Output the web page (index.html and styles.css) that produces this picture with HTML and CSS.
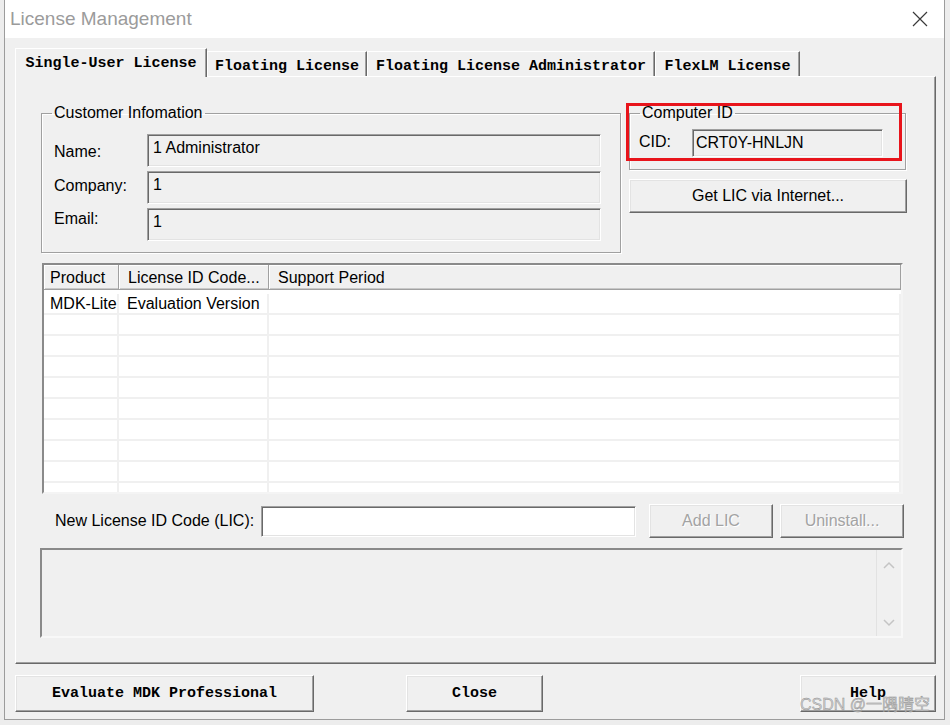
FILE: index.html
```html
<!DOCTYPE html>
<html>
<head>
<meta charset="utf-8">
<title>License Management</title>
<link rel="stylesheet" href="styles.css">
</head>
<body>
<div class="window">
  <div class="titlebar">
    <span class="title">License Management</span>
    <svg class="xbtn" viewBox="0 0 16 16"><path d="M1 1 L15 15 M15 1 L1 15" stroke="#3a3a3a" stroke-width="1.2" fill="none"/></svg>
  </div>
  <div class="client">
    <div class="tabs">
      <div class="tab active t1">Single-User License</div>
      <div class="tab t2">Floating License</div>
      <div class="tab t3">Floating License Administrator</div>
      <div class="tab t4">FlexLM License</div>
    </div>
    <div class="page">
      <div class="top">
        <fieldset class="group cust">
          <legend>Customer Infomation</legend>
          <div class="formgrid">
            <label class="lbl lbl-name">Name:</label><div class="field">1 Administrator</div>
            <label class="lbl lbl-comp">Company:</label><div class="field">1</div>
            <label class="lbl lbl-mail">Email:</label><div class="field">1</div>
          </div>
        </fieldset>
        <div class="rightcol">
          <fieldset class="group cid">
            <legend>Computer ID</legend>
            <div class="cidrow">
              <label class="cidlbl">CID:</label><div class="field cidfield">CRT0Y-HNLJN</div>
            </div>
          </fieldset>
          <div class="redbox"></div>
          <div class="btn getlic">Get LIC via Internet...</div>
        </div>
      </div>

      <div class="list">
        <div class="lhead">
          <div class="hcell">Product</div>
          <div class="hcell">License ID Code...</div>
          <div class="hcell">Support Period</div>
        </div>
        <div class="lbody">
          <div class="lrow"><div>MDK-Lite</div><div>Evaluation Version</div><div></div></div>
          <div class="lrow"><div></div><div></div><div></div></div>
          <div class="lrow"><div></div><div></div><div></div></div>
          <div class="lrow"><div></div><div></div><div></div></div>
          <div class="lrow"><div></div><div></div><div></div></div>
          <div class="lrow"><div></div><div></div><div></div></div>
          <div class="lrow"><div></div><div></div><div></div></div>
          <div class="lrow"><div></div><div></div><div></div></div>
          <div class="lrow"><div></div><div></div><div></div></div>
          <div class="lrow"><div></div><div></div><div></div></div>
        </div>
      </div>

      <div class="licrow">
        <label class="liclbl">New License ID Code (LIC):</label>
        <div class="licinput"></div>
        <div class="btn disabled addlic">Add LIC</div>
        <div class="btn disabled uninst">Uninstall...</div>
      </div>

      <div class="msg">
        <div class="msgtext"></div>
        <div class="vscroll">
          <svg viewBox="0 0 12 8"><path d="M1 7 L6 2 L11 7" stroke="#c4c4c4" stroke-width="1.5" fill="none"/></svg>
          <svg viewBox="0 0 12 8"><path d="M1 1 L6 6 L11 1" stroke="#c4c4c4" stroke-width="1.5" fill="none"/></svg>
        </div>
      </div>
    </div>

    <div class="buttons">
      <div class="btn mono evaluate">Evaluate MDK Professional</div>
      <div class="btn mono close">Close</div>
      <div class="btn mono help">Help</div>
    </div>
  </div>
  <div class="watermark">CSDN @一隅晴空</div>
</div>
</body>
</html>
```

FILE: styles.css
```css
* { box-sizing: border-box; }
html, body { margin: 0; padding: 0; }
body {
  width: 950px;
  height: 725px;
  overflow: hidden;
  background: #ededed;
  font-family: "Liberation Sans", Arial, sans-serif;
  font-size: 16px;
  color: #000;
}

.window {
  position: relative;
  margin-left: 4px;
  width: 941px;
  height: 720px;
  border: 1px solid #9c9c9c;
  border-top: none;
  background: #f0f0f0;
  display: flex;
  flex-direction: column;
}

.titlebar {
  flex: none;
  height: 38px;
  background: #fff;
  display: flex;
  align-items: center;
  justify-content: space-between;
  padding: 0 16px 0 5px;
}
.title { font-size: 19px; color: #9b9b9b; }
.xbtn { width: 16px; height: 16px; }

.client { flex: 1; }

/* tabs */
.tabs {
  display: flex;
  align-items: flex-end;
  height: 28px;
  margin: 10px 0 0 10px;
  position: relative;
  z-index: 1;
}
.tab {
  height: 25px;
  display: flex;
  align-items: center;
  justify-content: center;
  font-family: "Liberation Mono", "Courier New", monospace;
  font-weight: bold;
  font-size: 15px;
  background: #f0f0f0;
  border-top: 1px solid #fff;
  border-left: 1px solid #fff;
  border-right: 1px solid #696969;
  box-shadow: inset -1px 0 #a0a0a0;
  padding-top: 4px;
}
.tab.active { height: 29px; margin-bottom: -1px; padding-top: 0; }
.t1 { width: 192px; }
.t2 { width: 160px; }
.t3 { width: 288px; }
.t4 { width: 145px; }

/* tab page */
.page {
  margin-left: 10px;
  width: 921px;
  height: 588px;
  border-top: 1px solid #fff;
  border-left: 1px solid #fff;
  border-right: 1px solid #696969;
  border-bottom: 1px solid #696969;
  box-shadow: inset -1px -1px #a0a0a0;
  padding: 27px 0 0 25px;
}

.top { display: flex; align-items: flex-start; gap: 8px; }

.group {
  margin: 0;
  min-width: 0;
  border: 1px solid #a0a0a0;
  box-shadow: inset 1px 1px #fff, 1px 1px #fff;
}
.group legend {
  padding: 0 2px;
  font-size: 16px;
  line-height: 18px;
}

.cust { width: 580px; padding: 12px 0 11px 12px; }
.cust legend { margin-left: -2px; }
.formgrid {
  display: grid;
  grid-template-columns: 93px 454px;
  grid-auto-rows: 33px;
  row-gap: 4px;
  align-items: center;
}
.lbl-name { padding-top: 2px; }
.lbl-comp { padding-bottom: 4px; }
.lbl-mail { padding-bottom: 12px; }

.field {
  height: 33px;
  background: #f0f0f0;
  border: 1px solid;
  border-color: #a0a0a0 #fff #fff #a0a0a0;
  box-shadow: inset 1px 1px #696969, inset -1px -1px #e3e3e3;
  padding: 4px 0 0 5px;
  line-height: 18px;
}

.rightcol { position: relative; }
.cid { width: 277px; padding: 7px 0 12px 9px; }
.cid legend { margin-left: 1px; }
.cidrow { display: flex; align-items: center; }
.cidlbl { width: 53px; padding-bottom: 3px; }
.cidfield { width: 191px; height: 28px; padding: 4px 0 0 3px; }
.redbox {
  position: absolute;
  left: -3px;
  top: -1px;
  width: 276px;
  height: 58px;
  border: 3px solid #e8141b;
}

.btn {
  display: flex;
  align-items: center;
  justify-content: center;
  background: #f0f0f0;
  border: 1px solid;
  border-color: #fff #696969 #696969 #fff;
  box-shadow: inset -1px -1px #a0a0a0, inset 1px 1px #e3e3e3;
}
.getlic { width: 278px; height: 34px; margin-top: 9px; }
.btn.disabled { color: #a3a3a3; text-shadow: 1px 1px 0 #fff; }

/* list view */
.list {
  margin: 10px 0 0 1px;
  width: 861px;
  height: 231px;
  background: #fff;
  border: 2px solid;
  border-color: #8a8a8a #f4f4f4 #f4f4f4 #8a8a8a;
  overflow: hidden;
}
.lhead {
  display: grid;
  grid-template-columns: 75px 150px 1fr;
  height: 25px;
  background: #f0f0f0;
}
.hcell {
  padding: 4px 0 0 6px;
  border-right: 1px solid #a0a0a0;
  border-bottom: 1px solid #a0a0a0;
  box-shadow: inset 1px 1px #fff, inset 0 -1px #c8c8c8;
  line-height: 18px;
  white-space: nowrap;
}
.hcell + .hcell { padding-left: 9px; }
.lbody { padding-top: 4px; }
.lrow {
  display: grid;
  grid-template-columns: 75px 150px 1fr;
  height: 21px;
}
.lrow > div {
  border-right: 2px solid #f0f0f0;
  border-bottom: 2px solid #f0f0f0;
  padding: 1px 0 0 6px;
  line-height: 18px;
  white-space: nowrap;
}
.lrow > div + div { padding-left: 8px; }

/* LIC row */
.licrow {
  display: flex;
  align-items: center;
  margin-top: 10px;
  height: 34px;
}
.liclbl { margin-left: 14px; width: 206px; }
.licinput {
  width: 375px;
  height: 31px;
  background: #fff;
  border: 1px solid;
  border-color: #a0a0a0 #fff #fff #a0a0a0;
  box-shadow: inset 1px 1px #696969, inset -1px -1px #e3e3e3;
}
.addlic { width: 124px; height: 34px; margin-left: 13px; }
.uninst { width: 124px; height: 34px; margin-left: 7px; }

/* message box */
.msg {
  display: flex;
  margin: 10px 0 0 -1px;
  width: 863px;
  height: 90px;
  background: #f0f0f0;
  border: 2px solid;
  border-color: #8a8a8a #f8f8f8 #f8f8f8 #8a8a8a;
}
.msgtext { flex: 1; }
.vscroll {
  width: 25px;
  border-left: 1px solid #e2e2e2;
  display: flex;
  flex-direction: column;
  justify-content: space-between;
  align-items: center;
  padding: 11px 0 9px;
}
.vscroll svg { width: 12px; height: 8px; }

/* bottom buttons */
.buttons {
  display: flex;
  margin: 11px 0 0 10px;
}
.mono {
  font-family: "Liberation Mono", "Courier New", monospace;
  font-weight: bold;
  font-size: 15px;
  height: 37px;
}
.evaluate { width: 299px; }
.close { width: 137px; margin-left: 92px; }
.help { width: 136px; margin-left: 257px; }

.watermark {
  position: absolute;
  left: 795px;
  top: 696px;
  font-family: "Liberation Sans", "Noto Sans CJK SC", sans-serif;
  font-size: 16px;
  line-height: 18px;
  color: rgba(200, 200, 200, 0.85);
  -webkit-text-stroke: 0.4px #8c8c8c;
  pointer-events: none;
}
```
